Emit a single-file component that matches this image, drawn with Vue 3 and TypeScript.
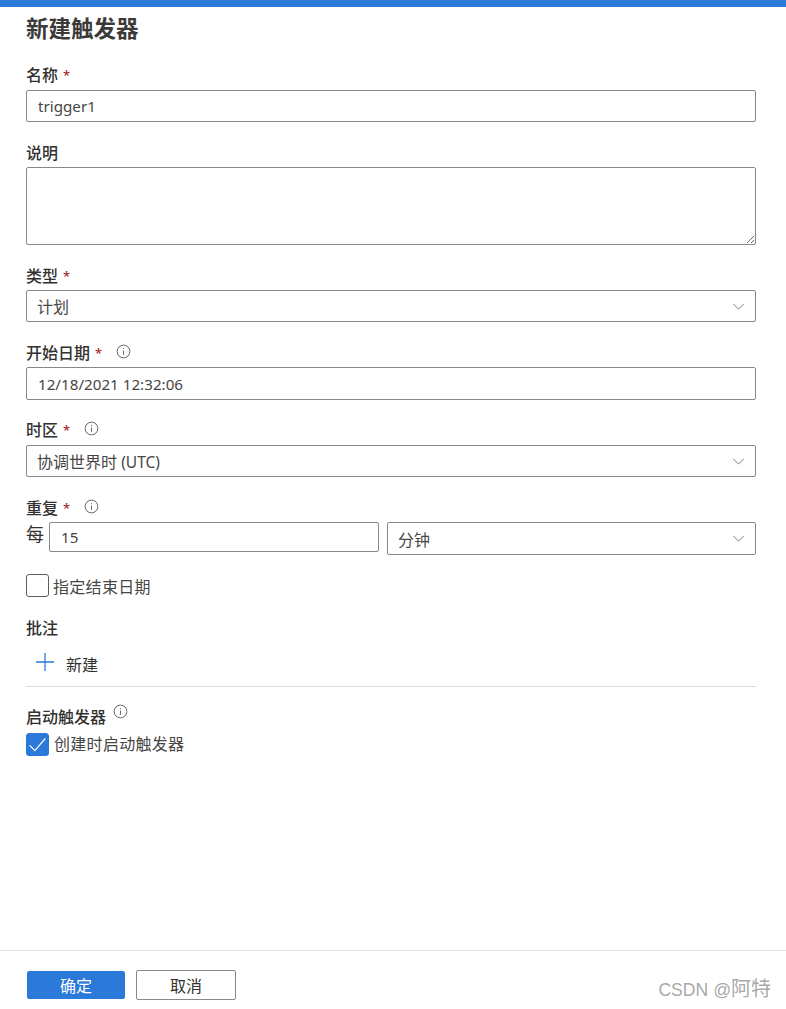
<script setup lang="ts">
import { ref } from 'vue';

const name = ref('trigger1');
const description = ref('');
const startDate = ref('12/18/2021 12:32:06');
const every = ref('15');
const hasEndDate = ref(false);
const startOnCreate = ref(true);
</script>

<template>
  <div class="page">
    <div class="topbar"></div>
    <h1 class="title">新建触发器</h1>

    <main class="form">
      <div class="field name-field">
        <label class="label">名称 <span class="req">*</span></label>
        <input v-model="name" class="input" />
      </div>

      <div class="field desc-field">
        <label class="label">说明</label>
        <textarea v-model="description" class="input area"></textarea>
      </div>

      <div class="field type-field">
        <label class="label">类型 <span class="req">*</span></label>
        <div class="select">
          <span>计划</span>
          <svg class="chevron" viewBox="0 0 14 8"><path d="M1 1l6 6 6-6" /></svg>
        </div>
      </div>

      <div class="field date-field">
        <label class="label">
          开始日期 <span class="req">*</span>
          <svg class="info" viewBox="0 0 16 16">
            <circle cx="8" cy="8" r="6.8" />
            <path d="M8 7v4.5M8 4.4v1.1" />
          </svg>
        </label>
        <input v-model="startDate" class="input date-input" />
      </div>

      <div class="field zone-field">
        <label class="label">
          时区 <span class="req">*</span>
          <svg class="info" viewBox="0 0 16 16">
            <circle cx="8" cy="8" r="6.8" />
            <path d="M8 7v4.5M8 4.4v1.1" />
          </svg>
        </label>
        <div class="select">
          <span>协调世界时 <span class="latin">(UTC)</span></span>
          <svg class="chevron" viewBox="0 0 14 8"><path d="M1 1l6 6 6-6" /></svg>
        </div>
      </div>

      <div class="field repeat-field">
        <label class="label">
          重复 <span class="req">*</span>
          <svg class="info" viewBox="0 0 16 16">
            <circle cx="8" cy="8" r="6.8" />
            <path d="M8 7v4.5M8 4.4v1.1" />
          </svg>
        </label>
        <div class="repeat-row">
          <span class="every">每</span>
          <input v-model="every" class="input every-input" />
          <div class="select unit">
            <span>分钟</span>
            <svg class="chevron" viewBox="0 0 14 8"><path d="M1 1l6 6 6-6" /></svg>
          </div>
        </div>
      </div>

      <div class="check-row end-row" @click="hasEndDate = !hasEndDate">
        <span class="box" :class="{ checked: hasEndDate }">
          <svg v-if="hasEndDate" viewBox="0 0 24 24"><path d="M3 13l6 6L21 5" /></svg>
        </span>
        <span class="check-text">指定结束日期</span>
      </div>

      <div class="notes">
        <div class="label">批注</div>
        <button class="add" type="button">
          <svg viewBox="0 0 18 18"><path d="M9 0v18M0 9h18" /></svg>
          <span>新建</span>
        </button>
      </div>

      <div class="activate">
        <label class="label">
          启动触发器
          <svg class="info info-top" viewBox="0 0 16 16">
            <circle cx="8" cy="8" r="6.8" />
            <path d="M8 7v4.5M8 4.4v1.1" />
          </svg>
        </label>
        <div class="check-row" @click="startOnCreate = !startOnCreate">
          <span class="box" :class="{ checked: startOnCreate }">
            <svg v-if="startOnCreate" viewBox="0 0 24 24"><path d="M3 13l6 6L21 5" /></svg>
          </span>
          <span class="check-text">创建时启动触发器</span>
        </div>
      </div>
    </main>

    <footer class="footer">
      <button class="btn primary" type="button">确定</button>
      <button class="btn" type="button">取消</button>
    </footer>

    <div class="watermark">CSDN @<span class="watermark-cjk">阿特</span></div>
  </div>
</template>

<style scoped>
.page {
  position: relative;
  display: flex;
  flex-direction: column;
  height: 1009px;
  overflow: hidden;
  background: #fff;
  color: #323130;
  font-family: "Noto Sans", "Noto Sans CJK SC", sans-serif;
  font-size: 15px;
}

.topbar {
  height: 7px;
  background: #2b79d8;
  flex: none;
}

.title {
  margin: 6px 0 0 26px;
  font-size: 22.5px;
  line-height: 32px;
  font-weight: 700;
  color: #3b3a39;
}

.form {
  padding: 0 30px 0 26px;
}

.label {
  display: flex;
  align-items: center;
  gap: 5px;
  height: 24px;
  font-size: 16px;
  font-weight: 500;
  line-height: 24px;
  color: #323130;
}

.req {
  color: #a4262c;
  font-size: 13px;
}

.field {
  display: flex;
  flex-direction: column;
  gap: 3px;
}

.name-field { margin-top: 18px; }
.desc-field { margin-top: 19px; gap: 2px; }
.type-field { margin-top: 19px; gap: 2px; }
.date-field { margin-top: 19px; gap: 2px; }
.zone-field { margin-top: 18px; }
.repeat-field { margin-top: 19px; }

.input {
  box-sizing: border-box;
  width: 100%;
  height: 32px;
  padding: 0 11px;
  border: 1px solid #8a8886;
  border-radius: 2px;
  background: #fff;
  color: #484644;
  font: inherit;
  font-size: 15.2px;
  outline: none;
}

.area {
  display: block;
  height: 78px;
  padding: 6px 11px;
}

.date-input { height: 33px; }

.select {
  box-sizing: border-box;
  display: flex;
  align-items: center;
  justify-content: space-between;
  height: 32px;
  padding: 0 10px;
  border: 1px solid #8a8886;
  border-radius: 2px;
  background: #fff;
  color: #484644;
  font-size: 16px;
}

.latin {
  font-size: 15.5px;
}

.chevron {
  width: 13px;
  height: 7px;
  fill: none;
  stroke: #7a7977;
  stroke-width: 1.1;
}

.info {
  width: 15px;
  height: 15px;
  margin: -4px 0 0 9px;
  fill: none;
  stroke: #605e5c;
  stroke-width: 1;
}

.info-top {
  margin: -12px 0 0 2px;
}

.repeat-row {
  display: flex;
  align-items: flex-start;
  margin-top: -1px;
}

.every {
  width: 23px;
  flex: none;
  font-size: 18px;
  line-height: 24px;
}

.every-input {
  width: 330px;
  height: 30px;
  flex: none;
  margin-right: 8px;
}

.unit {
  flex: 1;
  height: 33px;
}

.check-row {
  display: flex;
  align-items: center;
  gap: 4px;
  font-size: 16px;
  line-height: 24px;
  cursor: pointer;
}

.check-text {
  color: #484644;
  letter-spacing: 0.3px;
}

.end-row {
  margin-top: 16px;
}

.end-row .check-text {
  margin-top: 4px;
}

.box {
  box-sizing: border-box;
  display: block;
  width: 23px;
  height: 23px;
  flex: none;
  border: 1px solid #605e5c;
  border-radius: 3px;
  background: #fff;
}

.box.checked {
  border-color: #2b79d8;
  background: #2b79d8;
}

.box svg {
  display: block;
  width: 21px;
  height: 21px;
  fill: none;
  stroke: #fff;
  stroke-width: 1.5;
}

.notes {
  margin-top: 17px;
  padding-bottom: 7px;
  border-bottom: 1px solid #dcdcdc;
}

.add {
  display: flex;
  align-items: center;
  gap: 12px;
  height: 30px;
  margin-top: 9px;
  padding: 0 0 0 10px;
  border: 0;
  background: none;
  color: #323130;
  font: inherit;
  font-size: 16px;
}

.add svg {
  width: 18px;
  height: 18px;
  margin-top: -4px;
  flex: none;
  fill: none;
  stroke: #2b79d8;
  stroke-width: 1.3;
}

.activate {
  margin-top: 18px;
}

.activate .check-row {
  margin-top: 3px;
}

.activate .check-text {
  margin-left: 1px;
}

.footer {
  box-sizing: border-box;
  display: flex;
  align-items: center;
  gap: 11px;
  height: 59px;
  margin-top: auto;
  padding: 10px 0 0 27px;
  border-top: 1px solid #e1e1e1;
  flex: none;
}

.btn {
  box-sizing: border-box;
  width: 100px;
  height: 30px;
  border: 1px solid #8a8886;
  border-radius: 2px;
  background: #fff;
  color: #323130;
  font: inherit;
  font-size: 16px;
  padding: 0;
}

.primary {
  width: 98px;
  height: 28px;
  border-color: #2b79d8;
  background: #2b79d8;
  color: #fff;
}

.watermark {
  position: absolute;
  right: 15px;
  bottom: 6px;
  color: rgba(90, 90, 90, 0.55);
  font-family: "Liberation Sans", "Noto Sans CJK SC", sans-serif;
  font-size: 17.6px;
  line-height: 26px;
}

.watermark-cjk {
  font-size: 20px;
}
</style>
